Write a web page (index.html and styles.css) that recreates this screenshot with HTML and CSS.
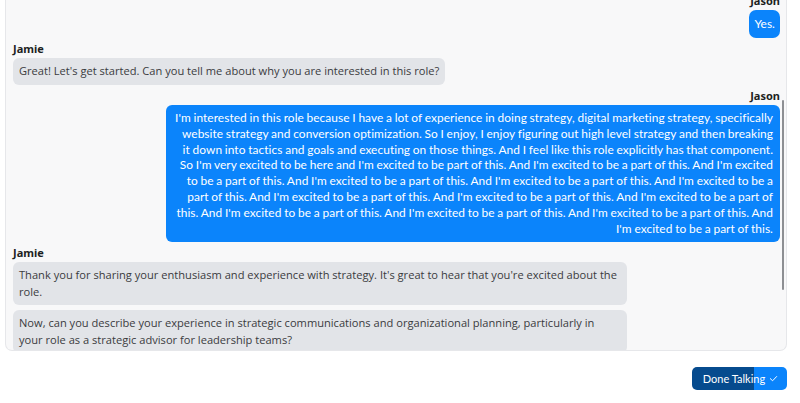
FILE: index.html
```html
<!DOCTYPE html>
<html lang="en">
<head>
<meta charset="utf-8">
<link rel="stylesheet" href="styles.css">
</head>
<body>
<div class="page">
  <div class="chat">
    <div class="messages">
      <div class="group me">
        <div class="name">Jason</div>
        <div class="bubble short">Yes.</div>
      </div>
      <div class="group them">
        <div class="name">Jamie</div>
        <div class="bubble">Great! Let's get started. Can you tell me about why you are interested in this role?</div>
      </div>
      <div class="group me">
        <div class="name">Jason</div>
        <div class="bubble">I'm interested in this role because I have a lot of experience in doing strategy, digital marketing strategy, specifically website strategy and conversion optimization. So I enjoy, I enjoy figuring out high level strategy and then breaking it down into tactics and goals and executing on those things. And I feel like this role explicitly has that component. So I'm very excited to be here and I'm excited to be part of this. And I'm excited to be a part of this. And I'm excited to be a part of this. And I'm excited to be a part of this. And I'm excited to be a part of this. And I'm excited to be a part of this. And I'm excited to be a part of this. And I'm excited to be a part of this. And I'm excited to be a part of this. And I'm excited to be a part of this. And I'm excited to be a part of this. And I'm excited to be a part of this. And I'm excited to be a part of this.</div>
      </div>
      <div class="group them">
        <div class="name">Jamie</div>
        <div class="bubble">Thank you for sharing your enthusiasm and experience with strategy. It's great to hear that you're excited about the role.</div>
        <div class="bubble">Now, can you describe your experience in strategic communications and organizational planning, particularly in your role as a strategic advisor for leadership teams?</div>
      </div>
    </div>
    <div class="scroll-thumb"></div>
  </div>
  <div class="actions">
    <button class="done">Done Talking
      <svg class="check" viewBox="0 0 10 10" width="9" height="9"><path d="M1.5 5.2 L4 7.5 L8.5 2.8" fill="none" stroke="#fff" stroke-width="1.1" stroke-linecap="round" stroke-linejoin="round"/></svg>
    </button>
  </div>
</div>
</body>
</html>
```
FILE: styles.css
```css
html, body {
  margin: 0;
  padding: 0;
  background: #ffffff;
}
body {
  font-family: "Lato", "Liberation Sans", sans-serif;
}
.page {
  padding: 0 13px 0 5px;
}
.chat {
  position: relative;
  height: 351px;
  box-sizing: border-box;
  background: #f8f8f9;
  border: 1px solid #e6e7ea;
  border-top: none;
  border-radius: 0 0 7px 7px;
  overflow: hidden;
  display: flex;
  flex-direction: column;
  justify-content: flex-end;
}
.messages {
  display: flex;
  flex-direction: column;
  padding: 0 6px 0 7px;
  margin-bottom: -3px;
}
.group {
  display: flex;
  flex-direction: column;
  gap: 5px;
  margin-top: 4px;
}
.group.me { align-items: flex-end; }
.group.them { align-items: flex-start; }
.name {
  font-family: "Noto Sans", sans-serif;
  font-weight: 700;
  font-size: 11px;
  line-height: 14px;
  color: #1d1f22;
  margin-bottom: -3px;
}
.bubble {
  max-width: 80%;
  box-sizing: border-box;
  border-radius: 6px;
  padding: 5px 6px;
}
.me .bubble {
  background: #0b84fb;
  color: #ffffff;
  text-align: right;
  font-family: "Lato", sans-serif;
  font-size: 11.92px;
  letter-spacing: 0.06px;
  word-spacing: -0.4px;
  line-height: 15.9px;
  padding: 5px 7px 5px 6px;
}
.me .bubble.short {
  padding: 6px 5px;
  border-radius: 7px;
}
.them .bubble {
  background: #e2e4e8;
  color: #3a3b3e;
  font-family: "Open Sans", sans-serif;
  font-size: 11.12px;
  line-height: 16.5px;
  padding: 5px 6px;
}
.scroll-thumb {
  position: absolute;
  right: 2px;
  top: 100px;
  width: 2px;
  height: 190px;
  background: #8d8f93;
  border-radius: 1px;
}
.actions {
  display: flex;
  justify-content: flex-end;
  margin-top: 16px;
}
.done {
  display: flex;
  align-items: center;
  gap: 4px;
  height: 23px;
  width: 95px;
  justify-content: center;
  border: none;
  border-radius: 5px;
  background: linear-gradient(to right, #064b8e 0, #064b8e 65%, #0b84fb 65%, #0b84fb 100%);
  color: #ffffff;
  font-family: "Lato", sans-serif;
  font-size: 11px;
  padding: 0 0 0 2px;
}
.check { display: block; }
```
